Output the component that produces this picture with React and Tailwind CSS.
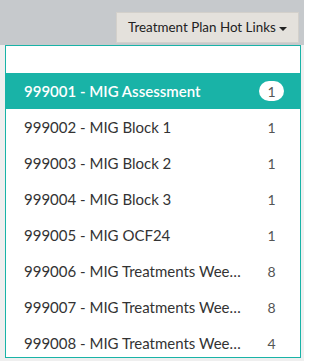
const links = [
  { code: "999001", name: "MIG Assessment", count: 1 },
  { code: "999002", name: "MIG Block 1", count: 1 },
  { code: "999003", name: "MIG Block 2", count: 1 },
  { code: "999004", name: "MIG Block 3", count: 1 },
  { code: "999005", name: "MIG OCF24", count: 1 },
  { code: "999006", name: "MIG Treatments Weeks 1-4", count: 8 },
  { code: "999007", name: "MIG Treatments Weeks 5-8", count: 8 },
  { code: "999008", name: "MIG Treatments Weeks 9-12", count: 4 },
];

export default function App() {
  return (
    <div
      className="w-[304px] h-[361px] overflow-hidden bg-[#efefef] flex flex-col"
      style={{ fontFamily: "Lato, 'Open Sans', sans-serif" }}
    >
      <div className="h-[45px] shrink-0 bg-[#c6c9cc] flex justify-end items-start pt-[12px] pr-[5px]">
        <button className="h-[31px] w-[183px] bg-[#e4e1dc] border border-[#d3d0cb] flex items-center pl-[11px] gap-[3px] text-[13.4px] text-[#222]">
          <span>Treatment Plan Hot Links</span>
          <svg width="8" height="4" viewBox="0 0 8 4" className="mt-[2px]">
            <path d="M0 0 L8 0 L4 4 Z" fill="#222" />
          </svg>
        </button>
      </div>
      <div className="ml-[5px] w-[296px] h-[313px] border border-[#19b3a7] bg-white overflow-hidden">
        <div className="h-[27px]" />
        {links.map((item, i) => (
          <div
            key={item.code}
            className={`h-[36px] flex items-center pl-[18px] pr-[7px] text-[15px] ${
              i === 0 ? "bg-[#19b3a7] text-white font-semibold" : "text-[#333]"
            }`}
          >
            <span className="w-[222px] truncate">
              {item.code} - {item.name}
            </span>
            <span className="flex-1 ml-[4px] flex justify-center">
              <span
                className={`text-[14px] ${
                  i === 0
                    ? "bg-white text-[#555] font-normal rounded-full w-[25px] h-[20px] flex items-center justify-center"
                    : "text-[#555]"
                }`}
              >
                {item.count}
              </span>
            </span>
          </div>
        ))}
      </div>
    </div>
  );
}
